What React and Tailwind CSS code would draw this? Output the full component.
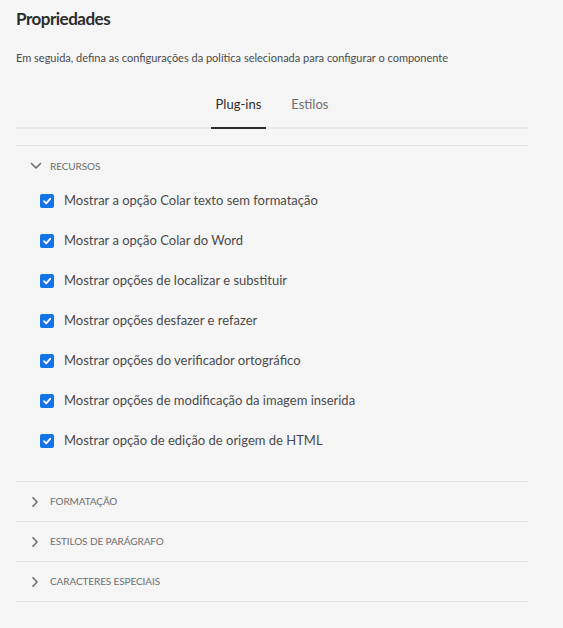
import React from "react";

const items = [
  "Mostrar a opção Colar texto sem formatação",
  "Mostrar a opção Colar do Word",
  "Mostrar opções de localizar e substituir",
  "Mostrar opções desfazer e refazer",
  "Mostrar opções do verificador ortográfico",
  "Mostrar opções de modificação da imagem inserida",
  "Mostrar opção de edição de origem de HTML",
];

function Check() {
  return (
    <span className="w-[14px] h-[14px] rounded-[2px] bg-[#1473e6] flex items-center justify-center shrink-0">
      <svg width="10" height="10" viewBox="0 0 10 10">
        <path d="M2 5.2 L4.2 7.4 L8.2 2.8" fill="none" stroke="#fff" strokeWidth="1.8" strokeLinecap="round" strokeLinejoin="round" />
      </svg>
    </span>
  );
}

function ChevronDown() {
  return (
    <svg width="12" height="10" viewBox="0 0 12 10" className="shrink-0">
      <path d="M1.5 2.5 L6 7 L10.5 2.5" fill="none" stroke="#6e6e6e" strokeWidth="1.6" strokeLinecap="round" strokeLinejoin="round" />
    </svg>
  );
}

function ChevronRight() {
  return (
    <svg width="12" height="10" viewBox="0 0 12 10" className="shrink-0">
      <path d="M3 0.8 L7 5 L3 9.2" fill="none" stroke="#6e6e6e" strokeWidth="1.6" strokeLinecap="round" strokeLinejoin="round" />
    </svg>
  );
}

function Collapsed({ label }) {
  return (
    <div className="h-[40px] border-b border-[#e1e1e1] flex items-center pl-[14px] gap-[8px]">
      <ChevronRight />
      <span className="text-[10px] tracking-[-0.1px] text-[#6e6e6e] uppercase">{label}</span>
    </div>
  );
}

export default function App() {
  return (
    <div className="w-[563px] h-[628px] bg-[#f5f5f5] px-4" style={{ fontFamily: 'Lato, "Open Sans", sans-serif' }}>
      <h1 className="pt-[6px] text-[17px] leading-[26px] font-bold tracking-[-0.5px] text-[#2c2c2c]">Propriedades</h1>
      <p className="mt-[18px] text-[11px] leading-[16px] text-[#4b4b4b]">
        Em seguida, defina as configurações da política selecionada para configurar o componente
      </p>
      <div className="w-[512px]">
        <div className="mt-[25px] flex justify-center gap-[30px] border-b-2 border-[#eaeaea] h-[38px]">
          <div className="relative flex items-start pt-[3px]">
            <span className="text-[13px] leading-[20px] text-[#2c2c2c]">Plug-ins</span>
            <span className="absolute left-[-5px] right-[-5px] bottom-[-2px] h-[2px] bg-[#2c2c2c]" />
          </div>
          <div className="flex items-start pt-[3px]">
            <span className="text-[13px] leading-[20px] text-[#6e6e6e]">Estilos</span>
          </div>
        </div>
        <div className="mt-[16px] border-t border-[#e1e1e1]">
          <div className="border-b border-[#e1e1e1] pb-[20px]">
            <div className="h-[40px] flex items-center pl-[14px] gap-[8px]">
              <ChevronDown />
              <span className="text-[10px] tracking-[-0.1px] text-[#6e6e6e] uppercase">Recursos</span>
            </div>
            <div className="pl-[24px] flex flex-col mt-[-5px]">
              {items.map((t) => (
                <div key={t} className="h-[40px] flex items-center gap-[10px]">
                  <Check />
                  <span className="text-[13px] text-[#4b4b4b]">{t}</span>
                </div>
              ))}
            </div>
          </div>
          <Collapsed label="Formatação" />
          <Collapsed label="Estilos de parágrafo" />
          <Collapsed label="Caracteres especiais" />
        </div>
      </div>
    </div>
  );
}
